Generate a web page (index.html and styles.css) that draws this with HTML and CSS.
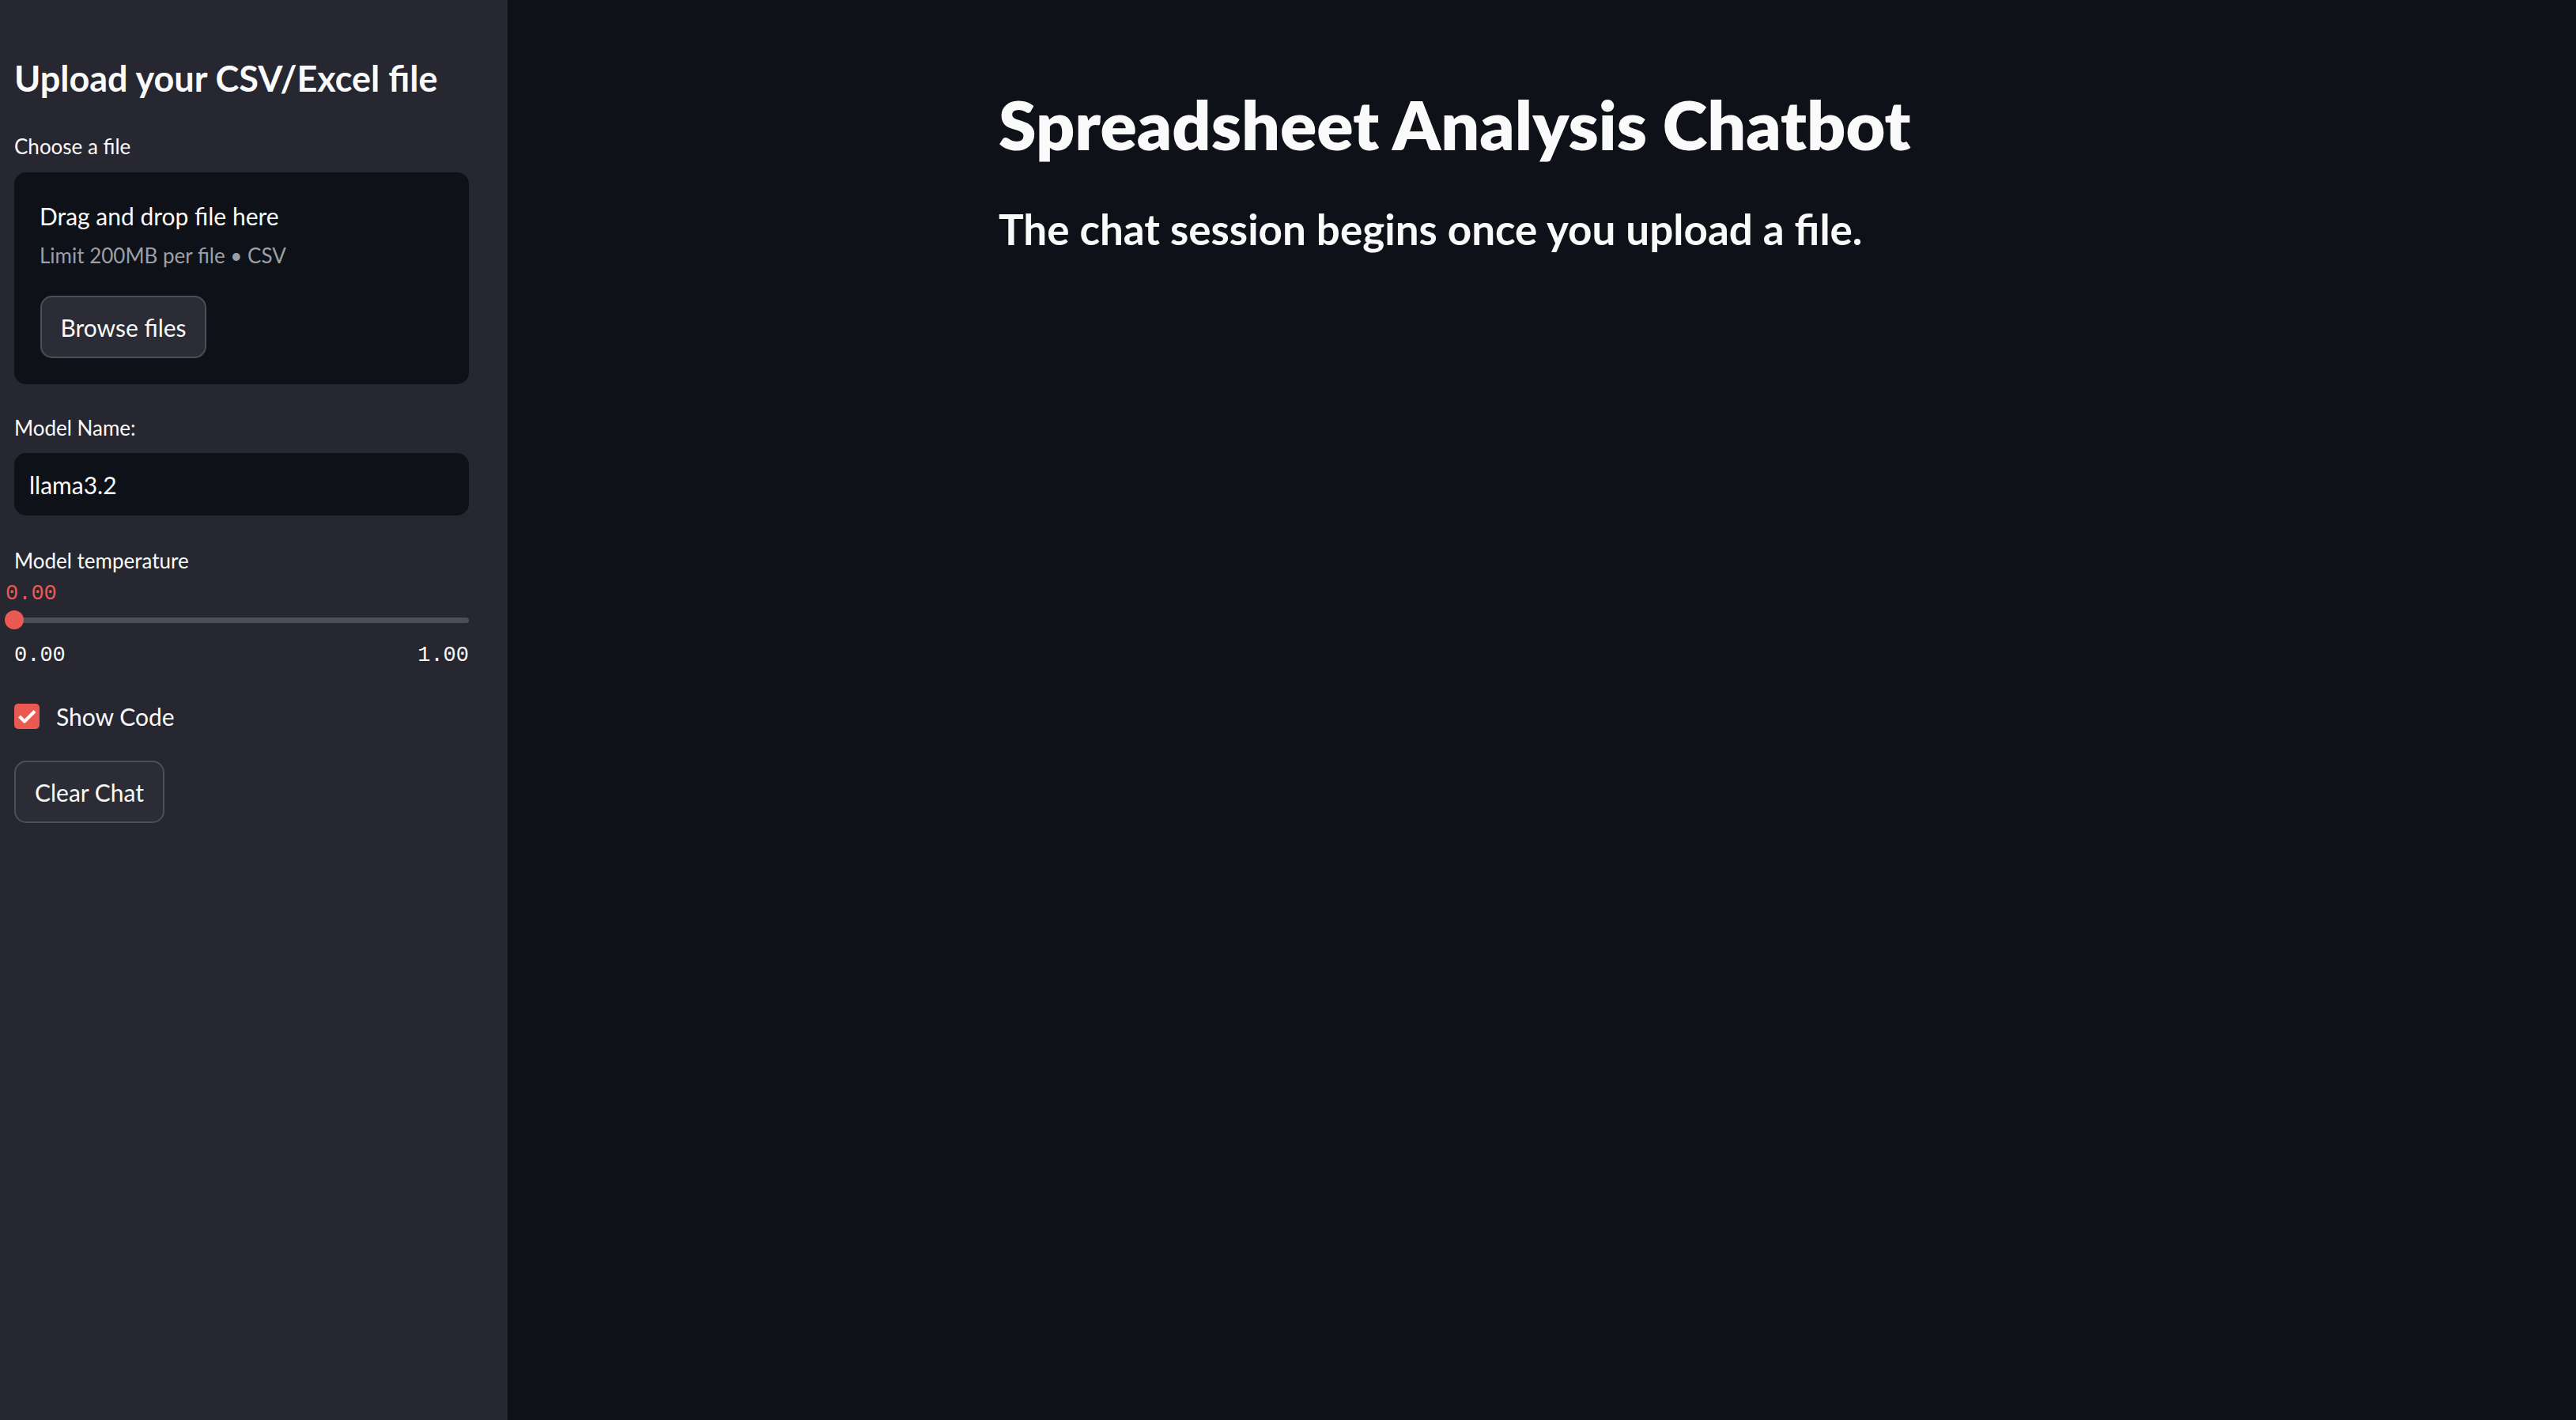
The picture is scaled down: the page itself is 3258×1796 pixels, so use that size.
FILE: index.html
```html
<!DOCTYPE html>
<html lang="en">
<head>
  <meta charset="UTF-8">
  <meta name="viewport" content="width=device-width, initial-scale=1.0">
  <title>Spreadsheet Analysis Chatbot</title>
  <link rel="stylesheet" href="styles.css">
</head>
<body>
  <aside class="sidebar">
    <h2 class="sidebar-title">Upload your CSV/Excel file</h2>

    <div class="label label-file">Choose a file</div>
    <div class="dropzone">
      <div class="drop-title">Drag and drop file here</div>
      <div class="drop-hint">Limit 200MB per file &bull; CSV</div>
      <button class="btn btn-browse">Browse files</button>
    </div>

    <div class="label label-model">Model Name:</div>
    <div class="text-input">llama3.2</div>

    <div class="label label-temp">Model temperature</div>
    <div class="slider-value">0.00</div>
    <div class="slider">
      <div class="rail"></div>
      <div class="thumb"></div>
    </div>
    <div class="slider-range">
      <span>0.00</span>
      <span>1.00</span>
    </div>

    <label class="checkbox-row">
      <span class="checkbox">
        <svg width="32" height="32" viewBox="0 0 32 32">
          <polyline points="6.5,16 13,22.5 26,9.5" fill="none" stroke="#fff" stroke-width="4" stroke-linejoin="round"/>
        </svg>
      </span>
      Show Code
    </label>

    <button class="btn btn-clear">Clear Chat</button>
  </aside>

  <main class="main">
    <div class="block">
      <h1 class="title">Spreadsheet Analysis Chatbot</h1>
      <h3 class="subtitle">The chat session begins once you upload a file.</h3>
    </div>
  </main>
</body>
</html>
```

FILE: styles.css
```css
* {
  box-sizing: border-box;
}
body {
  margin: 0;
  display: flex;
  min-height: 100vh;
  background-color: #0e1117;
  color: #fafafa;
  font-family: Lato, "Noto Sans", sans-serif;
}

/* sidebar */
.sidebar {
  width: 642px;
  flex-shrink: 0;
  background-color: #262730;
  padding: 72px 49px 0 18px;
  display: flex;
  flex-direction: column;
  align-items: stretch;
}
.sidebar-title {
  margin: 0;
  font-size: 45px;
  line-height: 54px;
  font-weight: 700;
}
.label {
  font-size: 26px;
  line-height: 36px;
}
.label-file {
  margin-top: 41px;
}
.dropzone {
  margin-top: 15px;
  background-color: #0e1117;
  border-radius: 15px;
  padding: 35px 32px 33px;
  display: flex;
  flex-direction: column;
  align-items: flex-start;
}
.drop-title {
  font-size: 30px;
  line-height: 40px;
}
.drop-hint {
  margin-top: 12px;
  font-size: 26px;
  line-height: 36px;
  color: #9d9fa6;
}
.btn {
  height: 79px;
  border: 2px solid #4d4e57;
  border-radius: 15px;
  background-color: #2b2c36;
  color: #fafafa;
  font-family: Lato, "Noto Sans", sans-serif;
  font-size: 30px;
  display: flex;
  align-items: center;
  justify-content: center;
  padding: 0;
}
.btn-browse {
  width: 210px;
  margin-top: 33px;
  margin-left: 1px;
}
.label-model {
  margin-top: 37px;
}
.text-input {
  margin-top: 14px;
  height: 79px;
  background-color: #0e1117;
  border-radius: 15px;
  padding: 0 19px;
  font-size: 30px;
  display: flex;
  align-items: center;
}
.label-temp {
  margin-top: 39px;
}

/* slider */
.slider-value {
  margin-top: 8px;
  margin-left: -11px;
  font-family: "Liberation Mono", monospace;
  font-size: 27px;
  line-height: 32px;
  color: #eb5a52;
}
.slider {
  position: relative;
  margin-top: 5px;
  height: 24px;
  display: flex;
  align-items: center;
}
.rail {
  width: 100%;
  height: 7px;
  border-radius: 4px;
  background-color: #4b4d57;
}
.thumb {
  position: absolute;
  left: -12px;
  top: 0;
  width: 24px;
  height: 24px;
  border-radius: 50%;
  background-color: #eb5a52;
}
.slider-range {
  margin-top: 17px;
  display: flex;
  justify-content: space-between;
  font-family: "Liberation Mono", monospace;
  font-size: 27px;
  line-height: 32px;
}

/* checkbox */
.checkbox-row {
  margin-top: 45px;
  height: 32px;
  display: flex;
  align-items: center;
  gap: 21px;
  font-size: 30px;
}
.checkbox {
  width: 32px;
  height: 32px;
  border-radius: 5px;
  background-color: #eb5a52;
  display: flex;
}
.btn-clear {
  width: 190px;
  margin-top: 40px;
}

/* main */
.main {
  flex: 1;
}
.block {
  max-width: 1374px;
  margin: 0 auto;
  padding-top: 105px;
}
.title {
  margin: 0;
  font-size: 86px;
  line-height: 1.2;
  font-weight: 800;
}
.subtitle {
  margin: 50px 0 0;
  font-size: 53px;
  line-height: 1.2;
  font-weight: 700;
}
```
